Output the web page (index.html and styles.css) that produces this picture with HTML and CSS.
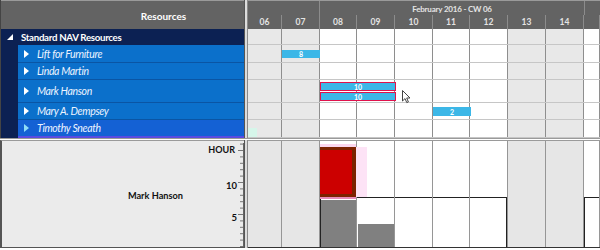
FILE: index.html
```html
<!DOCTYPE html>
<html lang="en">
<head>
    <meta charset="UTF-8">
    <title>Resource Planner</title>
    <link rel="stylesheet" href="styles.css">
</head>
<body>
    <div class="screen">
        <div class="top">
            <div class="resources">
                <div class="res-head">Resources</div>
                <div class="group-row">
                    <svg class="expander" width="6" height="6" viewBox="0 0 6 6"><polygon points="0,6 6,6 6,0" fill="#fff"/></svg>
                    <span>Standard NAV Resources</span>
                </div>
                <div class="res-row h18"><span class="arrow"></span>Lift for Furniture</div>
                <div class="res-row h17"><span class="arrow"></span>Linda Martin</div>
                <div class="res-row h23"><span class="arrow"></span>Mark Hanson</div>
                <div class="res-row h17"><span class="arrow"></span>Mary A. Dempsey</div>
                <div class="res-row h18 hovered"><span class="arrow"></span>Timothy Sneath</div>
            </div>
            <div class="splitter"></div>
            <div class="timeline">
                <div class="tl-head">
                    <div class="week-row">
                        <div class="wk wk-prev"></div>
                        <div class="wk wk-cur">February 2016 - CW 06</div>
                        <div class="wk wk-next"></div>
                    </div>
                    <div class="day-row">
                        <div class="day d06">06</div>
                        <div class="day d07">07</div>
                        <div class="day d08">08</div>
                        <div class="day d09">09</div>
                        <div class="day d10">10</div>
                        <div class="day d11">11</div>
                        <div class="day d12">12</div>
                        <div class="day d13">13</div>
                        <div class="day d14">14</div>
                        <div class="day d15"></div>
                    </div>
                </div>
                <div class="tl-body">
                    <div class="tl-row h16">
                        <div class="cell d06 we"></div><div class="cell d07 we"></div><div class="cell d08"></div><div class="cell d09"></div><div class="cell d10"></div><div class="cell d11"></div><div class="cell d12"></div><div class="cell d13 we"></div><div class="cell d14 we"></div><div class="cell d15"></div>
                    </div>
                    <div class="tl-row h18">
                        <div class="cell d06 we"></div>
                        <div class="cell d07 we"><div class="bar bar-lift">8</div></div>
                        <div class="cell d08"></div><div class="cell d09"></div><div class="cell d10"></div><div class="cell d11"></div><div class="cell d12"></div><div class="cell d13 we"></div><div class="cell d14 we"></div><div class="cell d15"></div>
                    </div>
                    <div class="tl-row h17">
                        <div class="cell d06 we"></div><div class="cell d07 we"></div><div class="cell d08"></div><div class="cell d09"></div><div class="cell d10"></div><div class="cell d11"></div><div class="cell d12"></div><div class="cell d13 we"></div><div class="cell d14 we"></div><div class="cell d15"></div>
                    </div>
                    <div class="tl-row h23">
                        <div class="cell d06 we"></div><div class="cell d07 we"></div>
                        <div class="cell d08">
                            <div class="bar-stack">
                                <div class="bar bar-sel">10</div>
                                <div class="bar bar-sel">10</div>
                            </div>
                        </div>
                        <div class="cell d09"></div><div class="cell d10"></div><div class="cell d11"></div><div class="cell d12"></div><div class="cell d13 we"></div><div class="cell d14 we"></div><div class="cell d15"></div>
                    </div>
                    <div class="tl-row h17">
                        <div class="cell d06 we"></div><div class="cell d07 we"></div><div class="cell d08"></div><div class="cell d09"></div><div class="cell d10"></div>
                        <div class="cell d11"><div class="bar bar-mary">2</div></div>
                        <div class="cell d12"></div><div class="cell d13 we"></div><div class="cell d14 we"></div><div class="cell d15"></div>
                    </div>
                    <div class="tl-row h18">
                        <div class="cell d06 we"><div class="ghost"></div></div><div class="cell d07 we"></div><div class="cell d08"></div><div class="cell d09"></div><div class="cell d10"></div><div class="cell d11"></div><div class="cell d12"></div><div class="cell d13 we"></div><div class="cell d14 we"></div><div class="cell d15"></div>
                    </div>
                    <svg class="cursor" width="10" height="14" viewBox="0 0 10 14">
                        <path d="M0.5 0.5 L0.5 11 L3 8.6 L4.8 12.6 L6.4 11.9 L4.7 8 L8 8 Z" fill="#fff" stroke="#444" stroke-width="1"/>
                    </svg>
                </div>
            </div>
        </div>

        <div class="bottom">
            <div class="chart-label">
                <div class="chart-name">Mark Hanson</div>
                <svg class="axis" width="60" height="106" viewBox="0 0 60 106">
                    <text x="51" y="11.5" text-anchor="end" class="axis-title">HOUR</text>
                    <text x="53" y="48" text-anchor="end" class="axis-num">10</text>
                    <text x="53" y="80" text-anchor="end" class="axis-num">5</text>
                    <line x1="59.5" y1="2" x2="59.5" y2="106" stroke="#666"/>
                    <g stroke="#777">
                        <line x1="56" y1="105.5" x2="59" y2="105.5"/>
                        <line x1="56" y1="99.1" x2="59" y2="99.1"/>
                        <line x1="56" y1="92.7" x2="59" y2="92.7"/>
                        <line x1="56" y1="86.3" x2="59" y2="86.3"/>
                        <line x1="56" y1="79.9" x2="59" y2="79.9"/>
                        <line x1="54" y1="73.5" x2="59" y2="73.5"/>
                        <line x1="56" y1="67.1" x2="59" y2="67.1"/>
                        <line x1="56" y1="60.7" x2="59" y2="60.7"/>
                        <line x1="56" y1="54.3" x2="59" y2="54.3"/>
                        <line x1="56" y1="47.9" x2="59" y2="47.9"/>
                        <line x1="54" y1="41.5" x2="59" y2="41.5"/>
                        <line x1="56" y1="35.1" x2="59" y2="35.1"/>
                        <line x1="56" y1="28.7" x2="59" y2="28.7"/>
                        <line x1="56" y1="22.3" x2="59" y2="22.3"/>
                        <line x1="56" y1="15.9" x2="59" y2="15.9"/>
                        <line x1="54" y1="9.5" x2="59" y2="9.5"/>
                        <line x1="56" y1="3.1" x2="59" y2="3.1"/>
                    </g>
                </svg>
            </div>
            <div class="splitter"></div>
            <div class="chart">
                <div class="col d06 we"></div>
                <div class="col d07 we"></div>
                <div class="col d08">
                    <div class="peak"></div>
                    <div class="cap cap-start"><div class="load full"></div></div>
                </div>
                <div class="col d09">
                    <div class="cap"><div class="load half"></div></div>
                </div>
                <div class="col d10"><div class="cap"></div></div>
                <div class="col d11"><div class="cap"></div></div>
                <div class="col d12"><div class="cap cap-end"></div></div>
                <div class="col d13 we"></div>
                <div class="col d14 we"></div>
                <div class="col d15"><div class="cap cap-start"></div></div>
            </div>
        </div>
    </div>
</body>
</html>
```

FILE: styles.css
```css
body {
    margin: 0;
    font-family: Lato, 'Open Sans', sans-serif;
    background-color: #ffffff;
}

.screen {
    width: 600px;
    height: 250px;
    overflow: hidden;
}

/* ---------- top part ---------- */

.top {
    display: flex;
    height: 139px;
    border-bottom: 1px solid #9a9a9a;
    box-sizing: border-box;
}

.resources {
    width: 244px;
    background-color: #0c2153;
    border-left: 1px solid #444444;
    box-sizing: border-box;
}

.res-head {
    height: 29px;
    background-color: #636363;
    border-top: 1px solid #9a9a9a;
    box-sizing: border-box;
    color: #ffffff;
    font-weight: bold;
    font-size: 10px;
    display: flex;
    align-items: center;
    justify-content: center;
    padding-left: 82px;
    padding-top: 2px;
}

.group-row {
    height: 16px;
    display: flex;
    align-items: center;
    color: #ffffff;
    font-weight: bold;
    font-size: 9.7px;
    letter-spacing: -0.3px;
}

.group-row .expander {
    margin-left: 6px;
    margin-right: 8px;
}

.res-row {
    margin-left: 17px;
    background-color: #0b70cb;
    border-bottom: 1px solid #0a55a4;
    box-sizing: border-box;
    display: flex;
    align-items: center;
    color: #eef4ff;
    font-style: italic;
    font-size: 10.5px;
    letter-spacing: -0.35px;
}

.res-row .arrow {
    width: 0;
    height: 0;
    border-top: 4px solid transparent;
    border-bottom: 4px solid transparent;
    border-left: 5px solid #ffffff;
    margin-left: 6px;
    margin-right: 8px;
}

.res-row.hovered {
    background-color: #1461d4;
    border-bottom: 2px solid #5a4be0;
}

.res-row.hovered .arrow {
    border-left-color: #8fdcf7;
}

.h16 { height: 16px; }
.h17 { height: 17px; }
.h18 { height: 18px; }
.h23 { height: 23px; }

.splitter {
    width: 4px;
    background-color: #dcdcdc;
    border-left: 1px solid #555555;
    border-right: 1px solid #8a8a8a;
    box-sizing: border-box;
}

.timeline {
    flex: 1;
    display: flex;
    flex-direction: column;
}

.tl-head {
    height: 29px;
    background-color: #636363;
    border-top: 1px solid #9a9a9a;
    box-sizing: border-box;
    color: #e4e4e4;
    font-weight: bold;
    font-size: 8.5px;
}

.week-row {
    display: flex;
    height: 14px;
}

.wk {
    box-sizing: border-box;
}

.wk-prev {
    width: 72px;
    border-right: 1px solid #8c8c8c;
}

.wk-cur {
    width: 265px;
    border-right: 1px solid #8c8c8c;
    display: flex;
    align-items: center;
    justify-content: center;
    font-size: 8px;
    letter-spacing: -0.2px;
    padding-top: 2px;
}

.wk-next {
    flex: 1;
}

.day-row {
    display: flex;
    height: 14px;
}

.day {
    display: flex;
    align-items: center;
    justify-content: center;
    border-right: 1px solid #8c8c8c;
    box-sizing: border-box;
}

.d06 { width: 34px; }
.d07 { width: 38px; }
.d08 { width: 37px; }
.d09 { width: 38px; }
.d10 { width: 38px; }
.d11 { width: 37px; }
.d12 { width: 38px; }
.d13 { width: 38px; }
.d14 { width: 38px; }
.d15 { flex: 1; }

.tl-body {
    position: relative;
    flex: 1;
}

.tl-row {
    display: flex;
    border-bottom: 1px solid #c6c6c6;
    box-sizing: border-box;
}

.cell {
    border-right: 1px solid #8e8e8e;
    box-sizing: border-box;
    background-color: #ffffff;
}

.cell.we {
    background-color: #e8e8e8;
}

.bar {
    position: relative;
    z-index: 1;
    background-color: #3cb7e7;
    color: #ffffff;
    font-size: 7px;
    font-weight: bold;
    display: flex;
    align-items: center;
    justify-content: center;
    box-sizing: border-box;
}

.bar-lift {
    margin-top: 5px;
    height: 8px;
    width: 38px;
}

.bar-mary {
    margin-top: 4px;
    height: 9px;
    width: 38px;
}

.bar-stack {
    display: flex;
    flex-direction: column;
    gap: 1px;
    padding-top: 2px;
}

.bar-sel {
    width: 76px;
    height: 9px;
    border: 1px solid #e0124c;
}

.ghost {
    width: 9px;
    height: 9px;
    margin-top: 8px;
    background-color: #d6f6ea;
}

.cursor {
    position: absolute;
    left: 154px;
    top: 61px;
}

/* ---------- bottom part ---------- */

.bottom {
    display: flex;
    height: 108px;
    margin-top: 1px;
}

.chart-label {
    width: 244px;
    background-color: #ebebeb;
    border-left: 2px solid #555555;
    border-top: 1px solid #9a9a9a;
    border-bottom: 1px solid #555555;
    box-sizing: border-box;
    display: flex;
    align-items: center;
}

.chart-name {
    flex: 1;
    text-align: right;
    font-weight: bold;
    font-size: 9.2px;
    color: #111111;
    padding-top: 2px;
    padding-right: 1px;
}

.axis {
    align-self: flex-start;
}

.axis-title {
    font-family: Lato, sans-serif;
    font-weight: bold;
    font-size: 9px;
    fill: #111111;
}

.axis-num {
    font-family: Lato, sans-serif;
    font-weight: bold;
    font-size: 9.5px;
    fill: #111111;
}

.chart {
    flex: 1;
    display: flex;
    border-top: 1px solid #9a9a9a;
    border-bottom: 1px solid #333333;
    box-sizing: border-box;
}

.col {
    border-right: 1px solid #969696;
    box-sizing: border-box;
    background-color: #ffffff;
    display: flex;
    flex-direction: column;
    justify-content: flex-end;
}

.col.we {
    background-color: #e6e6e6;
}

.peak {
    position: relative;
    z-index: 1;
    height: 50px;
    background-color: #cc0000;
    border-top: 3px solid #7c2200;
    border-right: 4px solid #7c2200;
    border-bottom: 3px solid #7c2200;
    box-sizing: border-box;
    box-shadow: 11px 0 0 #fde3f6, 0 -3px 0 #fbd6ee, 0 2px 0 #e98ab8;
}

.cap {
    height: 50px;
    border-top: 1px solid #222222;
    box-sizing: border-box;
    display: flex;
    flex-direction: column;
    justify-content: flex-end;
}

.cap-start {
    border-left: 1px solid #222222;
}

.cap-end {
    border-right: 1px solid #222222;
}

.load {
    background-color: #808080;
}

.load.full {
    height: 47px;
}

.load.half {
    height: 23px;
    margin-left: 1px;
}
```
